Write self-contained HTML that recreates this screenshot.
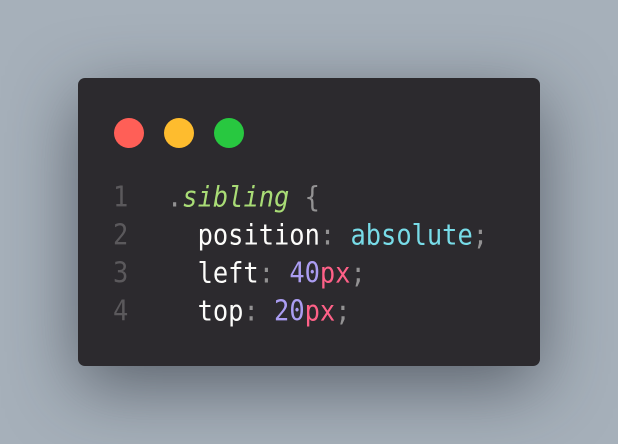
<!DOCTYPE html>
<html><head><style>
html,body{margin:0;padding:0;width:618px;height:444px;overflow:hidden;background:#a6b0ba;}
.card{position:absolute;left:78px;top:78px;width:462px;height:288px;background:#2c2a2e;border-radius:7px;box-shadow:0 20px 70px rgba(40,45,55,0.6);}
.dot{position:absolute;top:118px;width:30px;height:30px;border-radius:50%;}
.ln{position:absolute;font-family:"DejaVu Sans Mono","Liberation Mono",monospace;font-size:25.4px;line-height:38px;white-space:pre;transform:scaleY(1.12);transform-origin:0 60%;}
.n{color:#5b595c;left:113px;}
.c{left:167px;color:#fcfcfa;}
.g{color:#a9dc76;font-style:italic}.p{color:#939293}.cy{color:#78dce8}.pu{color:#ab9df2}.pk{color:#ff6188}
</style></head><body>
<div class="card"></div>
<div class="dot" style="left:114px;background:#ff5f57"></div>
<div class="dot" style="left:164px;background:#febc2e"></div>
<div class="dot" style="left:214px;background:#28c840"></div>
<div class="ln n" style="top:178px">1</div>
<div class="ln n" style="top:216px">2</div>
<div class="ln n" style="top:254px">3</div>
<div class="ln n" style="top:292px">4</div>
<div class="ln c" style="top:178px"><span class="p">.</span><span class="g">sibling</span> <span class="p">{</span></div>
<div class="ln c" style="top:216px">  position<span class="p">:</span> <span class="cy">absolute</span><span class="p">;</span></div>
<div class="ln c" style="top:254px">  left<span class="p">:</span> <span class="pu">40</span><span class="pk">px</span><span class="p">;</span></div>
<div class="ln c" style="top:292px">  top<span class="p">:</span> <span class="pu">20</span><span class="pk">px</span><span class="p">;</span></div>
</body></html>
